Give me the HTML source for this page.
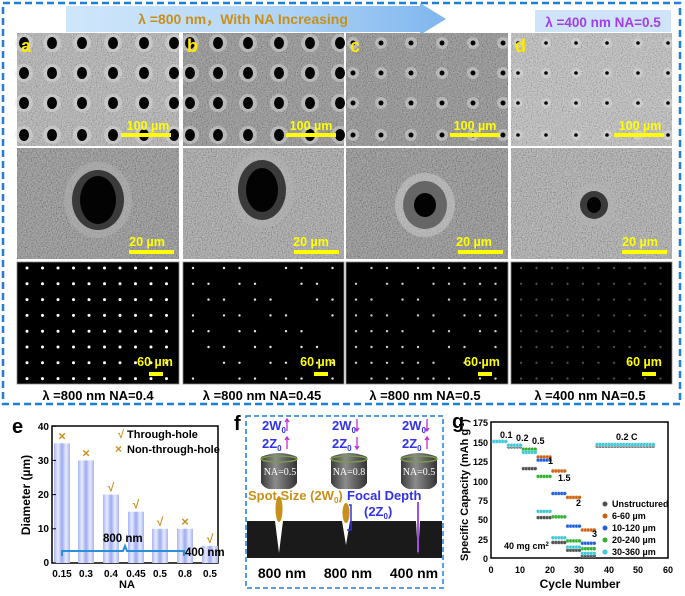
<!DOCTYPE html>
<html><head><meta charset="utf-8">
<style>
html,body{margin:0;padding:0;background:#fff;width:685px;height:596px;overflow:hidden}
svg{display:block;font-family:"Liberation Sans",Arial,sans-serif}
</style></head>
<body>
<svg id="s" width="685" height="596" viewBox="0 0 685 596" xmlns="http://www.w3.org/2000/svg" xml:space="preserve">
<defs>
<filter id="n1" x="0" y="0" width="100%" height="100%"><feTurbulence type="fractalNoise" baseFrequency="0.8" numOctaves="2" seed="3"/><feColorMatrix type="matrix" values="1.6 0 0 0 -0.3  1.6 0 0 0 -0.3  1.6 0 0 0 -0.3  0 0 0 0 1"/></filter>
<linearGradient id="arr" x1="0" x2="1"><stop offset="0" stop-color="#cfe6fb"/><stop offset="0.5" stop-color="#b7d8f7"/><stop offset="1" stop-color="#7fb6ee"/></linearGradient>
<linearGradient id="bar" x1="0" x2="1"><stop offset="0" stop-color="#a9b4f2"/><stop offset="0.25" stop-color="#e8ecff"/><stop offset="0.5" stop-color="#9eaaf0"/><stop offset="0.75" stop-color="#e8ecff"/><stop offset="1" stop-color="#a9b4f2"/></linearGradient>
<linearGradient id="objl" x1="0" x2="1"><stop offset="0" stop-color="#3a3a3a"/><stop offset="0.4" stop-color="#8c8c8c"/><stop offset="1" stop-color="#333"/></linearGradient>
</defs>
<rect x="3" y="3" width="677" height="401" fill="none" stroke="#1f7fd6" stroke-width="2.5" stroke-dasharray="7,4"/>
<polygon points="66,6 420,6 420,3 446,19 420,35 420,32 66,32" fill="url(#arr)"/>
<text x="243" y="24" font-size="14" font-weight="bold" fill="#c8901a" text-anchor="middle">λ =800 nm，With NA Increasing</text>
<rect x="535" y="10" width="136" height="22" fill="#cfe3f9"/>
<text x="603" y="27" font-size="13.5" font-weight="bold" fill="#a23de8" text-anchor="middle">λ =400 nm  NA=0.5</text>
<g id="imgs"></g>
<g font-size="13" font-weight="bold" fill="#000" text-anchor="middle">
<text x="98" y="400">λ =800 nm  NA=0.4</text>
<text x="262" y="400">λ =800 nm  NA=0.45</text>
<text x="425" y="400">λ =800 nm NA=0.5</text>
<text x="590" y="400">λ =400 nm  NA=0.5</text>
</g>
<g font-size="18" font-weight="bold" fill="#ffea00">
<text x="21" y="52">a</text><text x="187" y="52">b</text><text x="350" y="52">c</text><text x="515" y="52">d</text>
</g>
<g font-size="12.5" font-weight="bold" fill="#ffff00" text-anchor="middle">
<text x="148" y="130">100 µm</text><text x="311" y="130">100 µm</text><text x="475" y="130">100 µm</text><text x="640" y="130">100 µm</text>
<text x="147" y="246">20 µm</text><text x="311" y="246">20 µm</text><text x="474" y="246">20 µm</text><text x="640" y="246">20 µm</text>
<text x="155" y="366">60 µm</text><text x="318" y="366">60 µm</text><text x="482" y="366">60 µm</text><text x="644" y="366">60 µm</text>
</g>

<text x="12" y="433" font-size="20" font-weight="bold">e</text>
<g id="e"></g>
<text transform="translate(30,495) rotate(-90)" font-size="12" font-weight="bold" text-anchor="middle">Diameter (µm)</text>
<text x="127" y="588" font-size="11" font-weight="bold" text-anchor="middle">NA</text>
<text x="118" y="438" font-size="11" font-weight="bold" fill="#c8901a">√</text>
<text x="127" y="438" font-size="11" font-weight="bold">Through-hole</text>
<text x="115" y="453" font-size="12" font-weight="bold" fill="#c8901a">×</text>
<text x="127" y="453" font-size="11" font-weight="bold">Non-through-hole</text>
<path d="M62,556 V551 H123 L125,546 L127,551 H184 V556" fill="none" stroke="#2a8fd8" stroke-width="2"/>
<text x="103" y="542" font-size="11.5" font-weight="bold">800 nm</text>
<text x="185" y="556" font-size="11.5" font-weight="bold">400 nm</text>

<text x="234" y="430" font-size="20" font-weight="bold">f</text>
<rect x="246" y="416" width="197" height="172" fill="none" stroke="#1f7fd6" stroke-width="1.5" stroke-dasharray="5,3"/>
<rect x="247" y="521" width="195" height="37" fill="#1a1a1a"/>
<g id="f"></g>
<g font-size="13" font-weight="bold" fill="#3232e6">
<text x="262" y="430">2W<tspan font-size="8" dy="3">0</tspan></text>
<text x="262" y="448">2Z<tspan font-size="8" dy="3">0</tspan></text>
<text x="332" y="430">2W<tspan font-size="8" dy="3">0</tspan></text>
<text x="332" y="448">2Z<tspan font-size="8" dy="3">0</tspan></text>
<text x="402" y="430">2W<tspan font-size="8" dy="3">0</tspan></text>
<text x="402" y="448">2Z<tspan font-size="8" dy="3">0</tspan></text>
</g>
<g stroke="#c030d0" stroke-width="1.3" fill="none">
<path d="M287,431V419M285,422L287,419L289,422"/><path d="M287,449V437M285,440L287,437L289,440"/>
<path d="M357,419V431M355,428L357,431L359,428"/><path d="M357,437V449M355,446L357,449L359,446"/>
<path d="M427,419V431M425,428L427,431L429,428"/><path d="M427,449V437M425,440L427,437L429,440"/>
</g>
<g font-size="10" fill="#fff" font-family="Liberation Serif,serif" text-anchor="middle">
<text x="280" y="475">NA=0.5</text><text x="349" y="475">NA=0.8</text><text x="419" y="475">NA=0.5</text>
</g>
<text x="248" y="500" font-size="13" font-weight="bold" fill="#c8901a">Spot Size (2W<tspan font-size="8" dy="3">0</tspan><tspan dy="-3">)</tspan></text>
<text x="347" y="500" font-size="13" font-weight="bold" fill="#3232e6">Focal Depth</text>
<text x="364" y="516" font-size="13" font-weight="bold" fill="#3232e6">(2Z<tspan font-size="8" dy="3">0</tspan><tspan dy="-3">)</tspan></text>
<g font-size="14" font-weight="bold" text-anchor="middle">
<text x="282" y="578">800 nm</text><text x="348" y="578">800 nm</text><text x="414" y="578">400 nm</text>
</g>

<text x="452" y="428" font-size="20" font-weight="bold">g</text>
<g id="g"></g>
<text transform="translate(468,490) rotate(-90)" font-size="11" font-weight="bold" text-anchor="middle">Specific Capacity (mAh g<tspan font-size="7" dy="-4">-1</tspan><tspan dy="4">)</tspan></text>
<text x="580" y="588" font-size="12" font-weight="bold" text-anchor="middle">Cycle Number</text>
<text x="504" y="549" font-size="9" font-weight="bold">40 mg cm<tspan font-size="6" dy="-3">2</tspan></text>
<g font-size="9" font-weight="bold">
<text x="500" y="438">0.1</text><text x="516" y="441">0.2</text><text x="532" y="444">0.5</text>
<text x="548" y="464">1</text><text x="558" y="481">1.5</text><text x="576" y="506">2</text><text x="592" y="537">3</text>
<text x="616" y="440">0.2 C</text>
<text x="612" y="507">Unstructured</text><text x="612" y="519">6-60 µm</text><text x="612" y="531">10-120 µm</text><text x="612" y="543">20-240 µm</text><text x="612" y="555">30-360 µm</text>
</g>
<g font-size="10" font-weight="bold">
<text x="49" y="430" text-anchor="end">40</text><text x="49" y="464" text-anchor="end">30</text><text x="49" y="498" text-anchor="end">20</text><text x="49" y="532" text-anchor="end">10</text><text x="49" y="566" text-anchor="end">0</text>
<text x="62" y="577" text-anchor="middle">0.15</text><text x="86" y="577" text-anchor="middle">0.3</text><text x="111" y="577" text-anchor="middle">0.4</text><text x="136" y="577" text-anchor="middle">0.45</text><text x="160" y="577" text-anchor="middle">0.5</text><text x="185" y="577" text-anchor="middle">0.8</text><text x="210" y="577" text-anchor="middle">0.5</text>
</g>
<g font-size="9" font-weight="bold">
<text x="488" y="426" text-anchor="end">175</text><text x="488" y="446" text-anchor="end">150</text><text x="488" y="465" text-anchor="end">125</text><text x="488" y="485" text-anchor="end">100</text><text x="488" y="504" text-anchor="end">75</text><text x="488" y="523" text-anchor="end">50</text><text x="488" y="543" text-anchor="end">25</text><text x="488" y="562" text-anchor="end">0</text>
<text x="491" y="573" text-anchor="middle">0</text><text x="520" y="573" text-anchor="middle">10</text><text x="550" y="573" text-anchor="middle">20</text><text x="579" y="573" text-anchor="middle">30</text><text x="609" y="573" text-anchor="middle">40</text><text x="638" y="573" text-anchor="middle">50</text><text x="668" y="573" text-anchor="middle">60</text>
</g>
</svg>
<script>
var NS="http://www.w3.org/2000/svg";
function el(p,t,a){var e=document.createElementNS(NS,t);for(var k in a)e.setAttribute(k,a[k]);p.appendChild(e);return e;}
var I=document.getElementById("imgs");
var cols=[[17,162],[183,161],[346,162],[511,161]];
var bg1=["#b0b0b0","#8c8c8c","#8a8a8a","#bdbdbd"],bg2=["#8a8a8a","#a0a0a0","#888","#a8a8a8"];
cols.forEach(function(c,i){
 var x=c[0],w=c[1];
 el(I,"rect",{x:x,y:33,width:w,height:113,fill:bg1[i]});
 el(I,"rect",{x:x,y:33,width:w,height:113,filter:"url(#n1)",opacity:0.3});
 var xs=[7,35,65,96,127,157],ys=[43,73,103,135];
 xs.forEach(function(dx){ys.forEach(function(y){
  var r=[8,8,5,4][i];
  el(I,"circle",{cx:x+dx,cy:y,r:r+1,fill:"#e0e0e0",opacity:0.45});
  el(I,"ellipse",{cx:x+dx,cy:y,rx:[5,5,2.5,1.8][i],ry:[6,6,2.5,1.8][i],fill:"#050505"});
 });});
 el(I,"rect",{x:x+w-58,y:133,width:50,height:4,fill:"#ffff00"});
 el(I,"rect",{x:x,y:148,width:w,height:111,fill:bg2[i]});
 el(I,"rect",{x:x,y:148,width:w,height:111,filter:"url(#n1)",opacity:0.35});
 var hc=[[81,200,26,30,18,24],[79,190,24,30,16,22],[79,205,22,24,11,12],[83,205,14,14,7,8]][i];
 el(I,"ellipse",{cx:x+hc[0],cy:hc[1],rx:hc[2]+8,ry:hc[3]+8,fill:i==2?"#d0d0d0":"#b4b4b4",opacity:0.5});
 el(I,"ellipse",{cx:x+hc[0],cy:hc[1],rx:hc[2],ry:hc[3],fill:i==2?"#666":"#3a3a3a"});
 el(I,"ellipse",{cx:x+hc[0],cy:hc[1],rx:hc[4],ry:hc[5],fill:"#030303"});
 el(I,"rect",{x:x+w-50,y:250,width:45,height:4,fill:"#ffff00"});
 el(I,"rect",{x:x,y:262,width:w,height:122,fill:"#000",stroke:"#888","stroke-width":0.8});
 for(var a=0;a<10;a++)for(var b=0;b<8;b++){
  var s=(a*7+b*13+i*5)%10;
  if(i==1&&s<4)continue; if(i==2&&s<2)continue;
  var op=[1,0.9,0.8,0.3][i];
  el(I,"circle",{cx:x+10+a*15.5,cy:268+b*15.8,r:i==0?1.5:1.2,fill:"#fff",opacity:op});
 }
 el(I,"rect",{x:x+w-30,y:372,width:14,height:4,fill:"#ffff00"});
});
var E=document.getElementById("e");
el(E,"rect",{x:52,y:426,width:166,height:137,fill:"none",stroke:"#000","stroke-width":1.5});
var hs=[35,30,20,15,10,10,5],cx=[62,86,111,136,160,185,210],mk=["x","x","v","v","v","x","v"];
hs.forEach(function(h,i){var y=563-h*3.42;el(E,"rect",{x:cx[i]-8,y:y,width:16,height:563-y,fill:"url(#bar)"});
 var t=el(E,"text",{x:cx[i],y:y-3,"font-size":mk[i]=="x"?13:12,"font-weight":"bold",fill:"#c8901a","text-anchor":"middle"});t.textContent=mk[i]=="x"?"×":"√";});
[0,10,20,30,40].forEach(function(v){var y=563-v*3.42;el(E,"line",{x1:52,x2:56,y1:y,y2:y,stroke:"#000"});});
var F=document.getElementById("f");
[279,349,419].forEach(function(x){
 el(F,"path",{d:"M"+(x-18)+",457 Q"+x+",449 "+(x+18)+",457 V483 Q"+(x+15)+",488 "+(x+10)+",489 H"+(x-10)+" Q"+(x-15)+",488 "+(x-18)+",483Z",fill:"url(#objl)"});
 el(F,"ellipse",{cx:x,cy:459,rx:18,ry:3,fill:"none",stroke:"#7a9a4a","stroke-width":1.5});
});
el(F,"path",{d:"M275,521 L279,553 L283,521Z",fill:"#fff"});
el(F,"ellipse",{cx:279,cy:509,rx:3.5,ry:13,fill:"#c8901a"});
el(F,"path",{d:"M342,521 L346,545 L350,521Z",fill:"#fff"});
el(F,"ellipse",{cx:346,cy:513,rx:3.5,ry:10,fill:"#c8901a"});
el(F,"path",{d:"M349,505 H351 V530 H347",fill:"none",stroke:"#3232e6","stroke-width":1.5});
el(F,"path",{d:"M416,521 L418,555 L420,521Z",fill:"#fff"});
el(F,"line",{x1:418,y1:502,x2:418,y2:552,stroke:"#a050e0","stroke-width":2});
var G=document.getElementById("g");
el(G,"rect",{x:491,y:422,width:177,height:136,fill:"none",stroke:"#000","stroke-width":1.5});
function py(v){return 558-v*0.777;} function px(c){return 491+c*2.95;}
var series=[
 ["#505050",[150,143,115,52,20,10,3,144]],
 ["#d06010",[150,145,140,130,112,78,36,146]],
 ["#2060e0",[150,145,138,126,83,41,19,146]],
 ["#30b030",[150,145,140,105,53,22,12,146]],
 ["#40c8d8",[150,145,136,60,26,14,6,146]]];
series.forEach(function(s,k){
 s[1].forEach(function(v,j){var n=j==7?20:5,st=j*5+1;
  for(var c=0;c<n;c++)el(G,"circle",{cx:px(st+c),cy:py(v),r:1.9,fill:s[0],stroke:"#fff","stroke-width":0.3});});
 el(G,"circle",{cx:605,cy:504+k*12,r:2.5,fill:s[0]});
});
</script>
</body></html>
